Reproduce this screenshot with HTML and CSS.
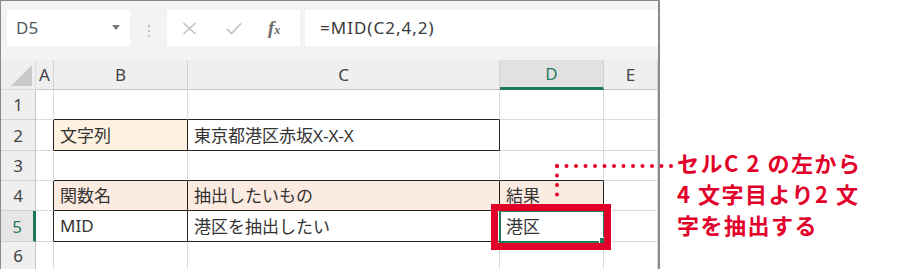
FILE: index.html
```
<!DOCTYPE html>
<html lang="ja">
<head>
    <meta charset="UTF-8">
    <title>MID関数</title>
    <link rel="stylesheet" href="styles.css">
</head>
<body>
<div class="page">
    <div class="sheet">
        <div class="toolbar">
            <div class="namebox"><span>D5</span><span class="caret"></span></div>
            <svg class="grip" width="6" height="14" viewBox="0 0 6 14">
                <circle cx="3" cy="2" r="1.2"/><circle cx="3" cy="7" r="1.2"/><circle cx="3" cy="12" r="1.2"/>
            </svg>
            <div class="fxbtns">
                <svg width="15" height="13" viewBox="0 0 15 13"><path d="M1.5 1 L13.5 12 M13.5 1 L1.5 12"/></svg>
                <svg width="16" height="13" viewBox="0 0 16 13"><path d="M1 7 L5.5 11.5 L15 1.5"/></svg>
                <span class="fx">f<small>x</small></span>
            </div>
            <div class="formula">=MID(C2,4,2)</div>
        </div>

        <div class="grid">
            <div class="corner"></div>
            <div class="ch">A</div>
            <div class="ch">B</div>
            <div class="ch">C</div>
            <div class="ch cur">D</div>
            <div class="ch">E</div>

            <div class="rh">1</div>
            <div class="c"></div><div class="c bb"></div><div class="c bb"></div><div class="c"></div><div class="c"></div>

            <div class="rh">2</div>
            <div class="c br"></div>
            <div class="c br bb beige">文字列</div>
            <div class="c br bb">東京都港区赤坂X-X-X</div>
            <div class="c"></div><div class="c"></div>

            <div class="rh">3</div>
            <div class="c"></div><div class="c bb"></div><div class="c bb"></div><div class="c bb"></div><div class="c"></div>

            <div class="rh">4</div>
            <div class="c br"></div>
            <div class="c br bb pink">関数名</div>
            <div class="c br bb pink">抽出したいもの</div>
            <div class="c br bb pink">結果</div>
            <div class="c"></div>

            <div class="rh cur">5</div>
            <div class="c br"></div>
            <div class="c br bb">MID</div>
            <div class="c br bb">港区を抽出したい</div>
            <div class="c br bb sel">港区<span class="handle"></span></div>
            <div class="c"></div>

            <div class="rh">6</div>
            <div class="c"></div><div class="c"></div><div class="c"></div><div class="c"></div><div class="c"></div>

            <div class="redbox"></div>
        </div>
    </div>

    <div class="note">
        <p>セル<span class="num">C2</span>の左から</p>
        <p><span class="num">4</span>文字目より<span class="num">2</span>文</p>
        <p>字を抽出する</p>
    </div>

    <svg class="leader" width="911" height="269">
        <line x1="557" y1="166" x2="672" y2="166"/>
        <line x1="557" y1="166" x2="557" y2="204"/>
    </svg>
</div>
</body>
</html>
```

FILE: styles.css
```
body {
    margin: 0;
    background: #fff;
    font-family: "Noto Sans", "Noto Sans CJK JP", sans-serif;
    color: #333;
}
.page {
    position: relative;
    display: flex;
    height: 269px;
    overflow: hidden;
}
.sheet {
    width: 657px;
    height: 269px;
    border-top: 1px solid #8a8a8a;
    border-left: 1px solid #8a8a8a;
    border-right: 2px solid #8a8a8a;
    background: #f3f3f3;
    flex: none;
}

/* formula bar */
.toolbar {
    height: 59px;
    display: flex;
    align-items: flex-start;
    padding-top: 9px;
    box-sizing: border-box;
}
.namebox {
    margin-left: 6px;
    width: 123px;
    height: 36px;
    background: #fff;
    display: flex;
    align-items: center;
    justify-content: space-between;
    box-sizing: border-box;
    padding: 0 10px 2px 9px;
    font-size: 17px;
    color: #4f5860;
}
.caret {
    width: 0;
    height: 0;
    border-left: 4px solid transparent;
    border-right: 4px solid transparent;
    border-top: 5px solid #777;
}
.grip {
    margin: 14px 15px 0 16px;
    fill: #c4c4c4;
}
.fxbtns {
    width: 133px;
    height: 36px;
    background: #fff;
    display: flex;
    align-items: center;
    box-sizing: border-box;
    padding-left: 15px;
    gap: 29px;
}
.fxbtns svg {
    fill: none;
    stroke: #c2c2c2;
    stroke-width: 1.6;
}
.fx {
    font-family: "Liberation Serif", serif;
    font-style: italic;
    font-weight: bold;
    font-size: 19px;
    color: #6a6a6a;
    margin-left: -3px;
}
.fx small {
    font-size: 12px;
}
.formula {
    margin-left: 5px;
    flex: 1;
    height: 36px;
    background: #fff;
    display: flex;
    align-items: center;
    padding-left: 15px;
    padding-bottom: 2px;
    box-sizing: border-box;
    font-size: 17px;
    letter-spacing: 1px;
    color: #3a3a3a;
}

/* cells */
.grid {
    position: relative;
    display: grid;
    grid-template-columns: 35px 18px 134px 312px 104px 54px;
    grid-template-rows: 30px 30px 31px 30px 30px 31px 28px;
    background: #fff;
    font-size: 17px;
}
.grid > div {
    box-sizing: border-box;
    border-right: 1px solid #dadada;
    border-bottom: 1px solid #dadada;
    display: flex;
    align-items: center;
    white-space: nowrap;
}
.corner {
    background: #efefef;
    position: relative;
}
.corner::after {
    content: "";
    position: absolute;
    right: 3px;
    bottom: 3px;
    border-left: 21px solid transparent;
    border-bottom: 21px solid #c9c9c9;
}
.grid > .ch {
    background: #efefef;
    justify-content: center;
    color: #444;
    border-right-color: #d2d2d2;
    border-bottom-color: #c6c6c6;
}
.grid > .rh {
    background: #efefef;
    justify-content: center;
    color: #444;
    border-right-color: #c6c6c6;
    border-bottom-color: #d2d2d2;
}
.grid > .ch.cur {
    background: #e1e1e1;
    color: #2a7a62;
    border-bottom: 3px solid #1d7a55;
}
.grid > .rh.cur {
    background: #e6e6e6;
    color: #2a7a62;
    border-right: 3px solid #1d7a55;
}
.c {
    padding-left: 6px;
    padding-bottom: 2px;
}
.grid > .br { border-right-color: #222; }
.grid > .bb { border-bottom-color: #222; }
.beige { background: #fdf1e0; }
.pink { background: #fcebe1; }
.sel {
    position: relative;
    outline: 2px solid #1f7a56;
    outline-offset: -1px;
}
.handle {
    position: absolute;
    right: -3px;
    bottom: -3px;
    width: 5px;
    height: 5px;
    background: #1f7a56;
    border: 1px solid #fff;
}
.grid > .redbox {
    position: absolute;
    left: 490px;
    top: 144px;
    width: 120px;
    height: 46px;
    border: 7px solid #e2002b;
    z-index: 3;
}

/* annotation */
.note {
    margin-left: 17px;
    padding-top: 147px;
    font-family: "Noto Sans CJK JP", sans-serif;
    font-weight: bold;
    font-size: 22px;
    letter-spacing: 1.5px;
    line-height: 31px;
    color: #e2002b;
}
.note p {
    margin: 0;
}
.note .num {
    letter-spacing: 8px;
}
.leader {
    position: absolute;
    left: 0;
    top: 0;
    z-index: 2;
}
.leader line {
    stroke: #e2002b;
    stroke-width: 4;
    stroke-linecap: round;
    stroke-dasharray: 0 9.5;
}
```
